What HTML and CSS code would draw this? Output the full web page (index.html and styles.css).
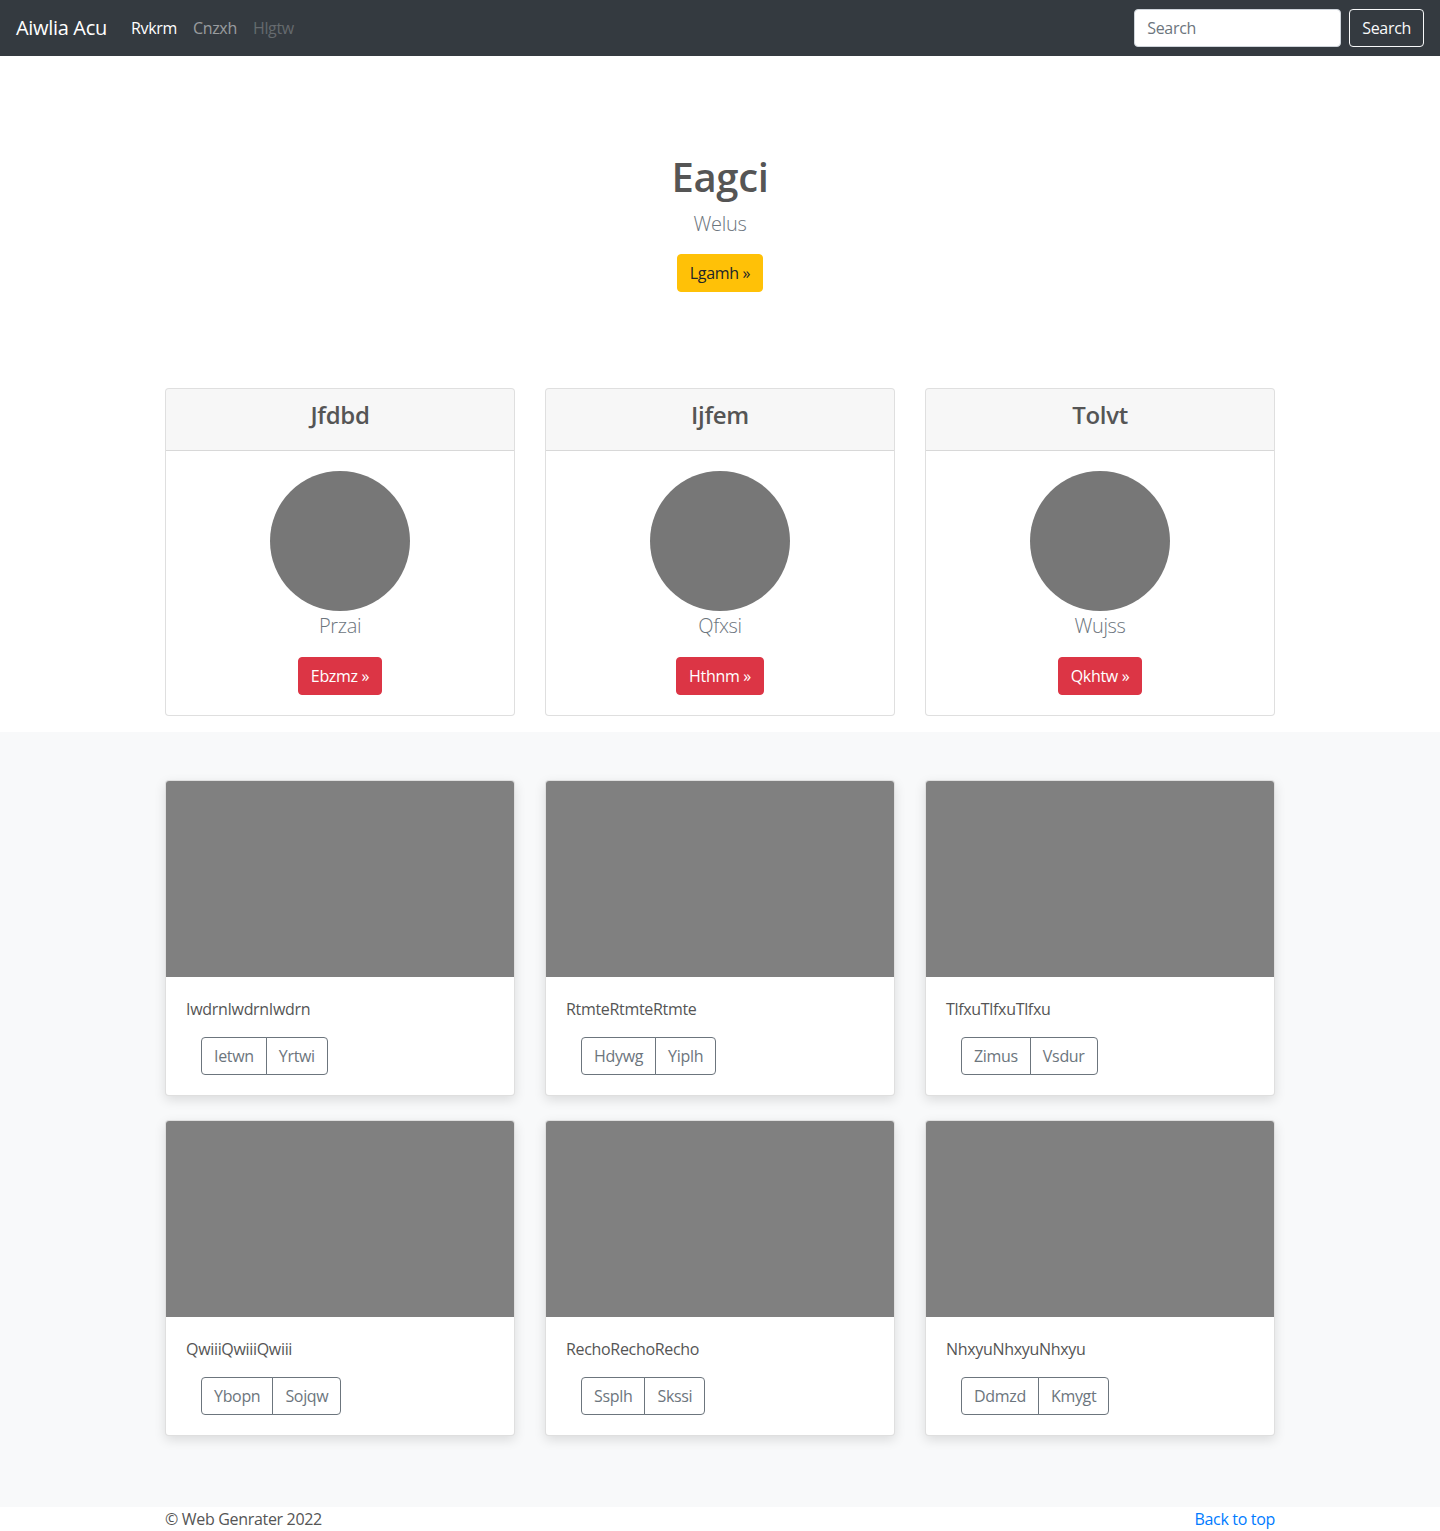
FILE: index.html
```html
<!DOCTYPE html>
<html lang="en">
<head>
  <meta charset="UTF-8">
  <meta name="viewport" content="width=device-width, initial-scale=1.0">
  <title>Aiwlia Acu</title>
  <link rel="stylesheet" href="styles.css">
</head>
<body>
<nav class="navbar">
  <a class="brand" href="#">Aiwlia Acu</a>
  <ul class="nav">
    <li><a class="nav-link active" href="#">Rvkrm</a></li>
    <li><a class="nav-link" href="#">Cnzxh</a></li>
    <li><a class="nav-link disabled" href="#">Hlgtw</a></li>
  </ul>
  <form class="search-form">
    <input class="search-input" type="text" placeholder="Search">
    <button class="btn btn-outline-light" type="button">Search</button>
  </form>
</nav>

<section class="hero">
  <h1>Eagci</h1>
  <p class="lead">Welus</p>
  <a class="btn btn-warning" href="#">Lgamh &raquo;</a>
</section>

<div class="container">
  <div class="feature-row">
    <div class="card">
      <div class="card-header"><h4>Jfdbd</h4></div>
      <div class="card-body center">
        <div class="avatar"></div>
        <p class="lead">Przai</p>
        <a class="btn btn-danger" href="#">Ebzmz &raquo;</a>
      </div>
    </div>
    <div class="card">
      <div class="card-header"><h4>Ijfem</h4></div>
      <div class="card-body center">
        <div class="avatar"></div>
        <p class="lead">Qfxsi</p>
        <a class="btn btn-danger" href="#">Hthnm &raquo;</a>
      </div>
    </div>
    <div class="card">
      <div class="card-header"><h4>Tolvt</h4></div>
      <div class="card-body center">
        <div class="avatar"></div>
        <p class="lead">Wujss</p>
        <a class="btn btn-danger" href="#">Qkhtw &raquo;</a>
      </div>
    </div>
  </div>
</div>

<div class="album">
  <div class="container">
    <div class="album-grid">
      <div class="card shadow">
        <div class="thumb"></div>
        <div class="card-body">
          <p class="card-text">IwdrnIwdrnIwdrn</p>
          <div class="btn-group">
            <button class="btn btn-outline-secondary" type="button">Ietwn</button>
            <button class="btn btn-outline-secondary" type="button">Yrtwi</button>
          </div>
        </div>
      </div>
      <div class="card shadow">
        <div class="thumb"></div>
        <div class="card-body">
          <p class="card-text">RtmteRtmteRtmte</p>
          <div class="btn-group">
            <button class="btn btn-outline-secondary" type="button">Hdywg</button>
            <button class="btn btn-outline-secondary" type="button">Yiplh</button>
          </div>
        </div>
      </div>
      <div class="card shadow">
        <div class="thumb"></div>
        <div class="card-body">
          <p class="card-text">TlfxuTlfxuTlfxu</p>
          <div class="btn-group">
            <button class="btn btn-outline-secondary" type="button">Zimus</button>
            <button class="btn btn-outline-secondary" type="button">Vsdur</button>
          </div>
        </div>
      </div>
      <div class="card shadow">
        <div class="thumb"></div>
        <div class="card-body">
          <p class="card-text">QwiiiQwiiiQwiii</p>
          <div class="btn-group">
            <button class="btn btn-outline-secondary" type="button">Ybopn</button>
            <button class="btn btn-outline-secondary" type="button">Sojqw</button>
          </div>
        </div>
      </div>
      <div class="card shadow">
        <div class="thumb"></div>
        <div class="card-body">
          <p class="card-text">RechoRechoRecho</p>
          <div class="btn-group">
            <button class="btn btn-outline-secondary" type="button">Ssplh</button>
            <button class="btn btn-outline-secondary" type="button">Skssi</button>
          </div>
        </div>
      </div>
      <div class="card shadow">
        <div class="thumb"></div>
        <div class="card-body">
          <p class="card-text">NhxyuNhxyuNhxyu</p>
          <div class="btn-group">
            <button class="btn btn-outline-secondary" type="button">Ddmzd</button>
            <button class="btn btn-outline-secondary" type="button">Kmygt</button>
          </div>
        </div>
      </div>
    </div>
  </div>
</div>

<footer class="container footer">
  <p>&copy; Web Genrater 2022</p>
  <a href="#">Back to top</a>
</footer>
</body>
</html>
```

FILE: styles.css
```css
* {
  box-sizing: border-box;
}
body {
  font-family: "Open Sans", "Noto Sans", sans-serif;
  font-size: 16px;
  line-height: 1.5;
  letter-spacing: -0.02em;
  color: #555;
  background-color: #fff;
  margin: 0;
}
a {
  text-decoration: none;
}
p {
  margin: 0;
}
.container {
  max-width: 1140px;
  margin: 0 auto;
  padding: 0 15px;
}

/* navbar */
.navbar {
  display: flex;
  align-items: center;
  height: 56px;
  padding: 8px 16px;
  background-color: #343a40;
}
.brand {
  color: #fff;
  font-size: 20px;
  margin-right: 16px;
}
.nav {
  display: flex;
  list-style: none;
  margin: 0;
  padding: 0;
  flex: 1;
}
.nav-link {
  display: block;
  padding: 8px;
  color: rgba(255,255,255,0.5);
}
.nav-link.active {
  color: #fff;
}
.nav-link.disabled {
  color: rgba(255,255,255,0.25);
}
.search-form {
  display: flex;
  align-items: center;
}
.search-input {
  width: 207px;
  height: 38px;
  padding: 6px 12px;
  margin-right: 8px;
  font-family: inherit;
  font-size: 16px;
  letter-spacing: inherit;
  color: #495057;
  border: 1px solid #ced4da;
  border-radius: 4px;
}
.search-input::placeholder {
  color: #6c757d;
}

/* buttons */
.btn {
  display: inline-block;
  font-family: inherit;
  font-size: 16px;
  letter-spacing: inherit;
  line-height: 24px;
  padding: 6px 12px;
  border: 1px solid transparent;
  border-radius: 4px;
  background: transparent;
  cursor: pointer;
}
.btn-outline-light {
  color: #f8f9fa;
  border-color: #f8f9fa;
}
.btn-warning {
  color: #212529;
  background-color: #ffc107;
  border-color: #ffc107;
}
.btn-danger {
  color: #fff;
  background-color: #dc3545;
  border-color: #dc3545;
}
.btn-outline-secondary {
  color: #6c757d;
  border-color: #6c757d;
}

/* hero */
.hero {
  text-align: center;
  padding: 97px 0 96px;
}
.hero h1 {
  font-size: 40px;
  font-weight: 600;
  line-height: 1.2;
  margin: 0 0 8px;
}
.lead {
  font-size: 20px;
  font-weight: 300;
  color: #6c757d;
  margin-bottom: 15px;
}
.card-body .lead {
  margin-bottom: 16px;
}

/* pricing-like cards */
.feature-row {
  display: grid;
  grid-template-columns: repeat(3, 1fr);
  gap: 30px;
  margin-bottom: 16px;
}
.card {
  background-color: #fff;
  border: 1px solid rgba(0,0,0,0.125);
  border-radius: 4px;
  overflow: hidden;
}
.card-header {
  text-align: center;
  padding: 12px 20px;
  background-color: rgba(0,0,0,0.03);
  border-bottom: 1px solid rgba(0,0,0,0.125);
}
.card-header h4 {
  font-size: 24px;
  font-weight: 600;
  line-height: 1.2;
  margin: 0 0 8px;
}
.card-body {
  padding: 20px;
}
.center {
  text-align: center;
}
.avatar {
  width: 140px;
  height: 140px;
  margin: 0 auto;
  border-radius: 50%;
  background-color: #777;
}

/* album */
.album {
  background-color: #f8f9fa;
  padding: 48px 0 71px;
}
.album-grid {
  display: grid;
  grid-template-columns: repeat(3, 1fr);
  column-gap: 30px;
  row-gap: 24px;
}
.shadow {
  box-shadow: 0 4px 12px rgba(0,0,0,0.12);
}
.thumb {
  height: 196px;
  background-color: #808080;
}
.card-text {
  margin-bottom: 16px;
}
.btn-group {
  display: inline-flex;
  margin-left: 15px;
}
.btn-group .btn:first-child {
  border-radius: 4px 0 0 4px;
}
.btn-group .btn:last-child {
  border-radius: 0 4px 4px 0;
  margin-left: -1px;
}

/* footer */
.footer {
  display: flex;
  justify-content: space-between;
  line-height: 24px;
  color: #555;
}
.footer a {
  color: #007bff;
}
```
